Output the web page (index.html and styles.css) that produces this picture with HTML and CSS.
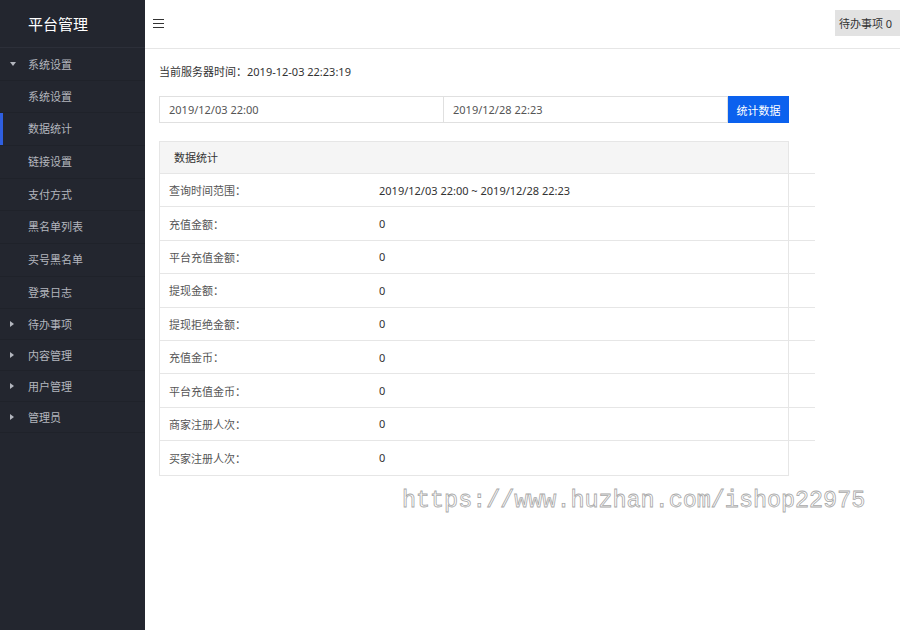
FILE: index.html
```html
<!DOCTYPE html>
<html lang="zh-CN">

<head>
  <meta charset="UTF-8">
  <meta name="viewport" content="width=device-width, initial-scale=1.0">
  <title>平台管理 - 数据统计</title>
  <link rel="stylesheet" href="styles.css">
</head>

<body>
  <aside class="sidebar">
    <div class="logo">平台管理</div>
    <ul class="menu">
      <li class="menu-group open">
        <div class="menu-title"><span class="caret"></span>系统设置</div>
        <ul class="submenu">
          <li>系统设置</li>
          <li class="active">数据统计</li>
          <li>链接设置</li>
          <li>支付方式</li>
          <li>黑名单列表</li>
          <li>买号黑名单</li>
          <li>登录日志</li>
        </ul>
      </li>
      <li class="menu-group"><div class="menu-title"><span class="caret"></span>待办事项</div></li>
      <li class="menu-group"><div class="menu-title"><span class="caret"></span>内容管理</div></li>
      <li class="menu-group"><div class="menu-title"><span class="caret"></span>用户管理</div></li>
      <li class="menu-group"><div class="menu-title"><span class="caret"></span>管理员</div></li>
    </ul>
  </aside>

  <div class="page">
    <header class="topbar">
      <span class="hamburger">
        <svg width="11" height="9" viewBox="0 0 11 9"><path d="M0 0.5h11M0 4.5h11M0 8.5h11" stroke="#333" stroke-width="1"/></svg>
      </span>
      <button class="todo-btn">待办事项 0</button>
    </header>

    <main class="content">
      <p class="server-time">当前服务器时间：2019-12-03 22:23:19</p>

      <form class="search-bar">
        <input type="text" value="2019/12/03 22:00">
        <input type="text" value="2019/12/28 22:23">
        <button type="button">统计数据</button>
      </form>

      <div class="panel">
        <div class="panel-head">数据统计</div>
        <div class="row"><span class="label">查询时间范围：</span><span>2019/12/03 22:00 ~ 2019/12/28 22:23</span></div>
        <div class="row"><span class="label">充值金额：</span><span>0</span></div>
        <div class="row"><span class="label">平台充值金额：</span><span>0</span></div>
        <div class="row"><span class="label">提现金额：</span><span>0</span></div>
        <div class="row"><span class="label">提现拒绝金额：</span><span>0</span></div>
        <div class="row"><span class="label">充值金币：</span><span>0</span></div>
        <div class="row"><span class="label">平台充值金币：</span><span>0</span></div>
        <div class="row"><span class="label">商家注册人次：</span><span>0</span></div>
        <div class="row last"><span class="label">买家注册人次：</span><span>0</span></div>
      </div>
    </main>
  </div>

  <div class="watermark">https://www.huzhan.com/ishop22975</div>
</body>

</html>
```

FILE: styles.css
```css
* {
  box-sizing: border-box;
}

body {
  margin: 0;
  display: flex;
  height: 100vh;
  font-family: "Noto Sans", "Noto Sans CJK SC", sans-serif;
  font-size: 11px;
  color: #333;
  background: #fff;
  overflow: hidden;
}

ul {
  list-style: none;
  margin: 0;
  padding: 0;
}

.sidebar {
  width: 145px;
  flex-shrink: 0;
  background-color: #23262f;
  color: #b3b6be;
}

.logo {
  height: 48px;
  line-height: 48px;
  padding-left: 28px;
  font-size: 15px;
  color: #fff;
  border-bottom: 1px solid #2c2f39;
}

.menu-title {
  display: flex;
  align-items: center;
  height: 31px;
  padding-left: 10px;
  border-bottom: 1px solid #1f222a;
}

.menu-group.open > .menu-title {
  height: 32.5px;
}

.caret {
  width: 0;
  height: 0;
  margin-right: 14px;
  border-top: 3px solid transparent;
  border-bottom: 3px solid transparent;
  border-left: 4px solid #b3b6be;
}

.menu-group.open .caret {
  border-left: 3px solid transparent;
  border-right: 3px solid transparent;
  border-top: 4px solid #b3b6be;
  border-bottom: 0;
  margin-right: 12px;
}

.submenu li {
  height: 32.7px;
  line-height: 32px;
  padding-left: 28px;
  border-bottom: 1px solid #1f222a;
}

.submenu li.active {
  box-shadow: inset 3px 0 0 #2f5fe0;
}

.page {
  flex: 1;
  display: flex;
  flex-direction: column;
}

.topbar {
  height: 49px;
  display: flex;
  align-items: flex-start;
  justify-content: space-between;
  border-bottom: 1px solid #e6e6e6;
}

.hamburger {
  display: block;
  margin: 19px 0 0 8px;
  line-height: 0;
}

.todo-btn {
  margin-top: 10px;
  height: 26px;
  width: 65px;
  border: none;
  background-color: #e2e2e2;
  color: #333;
  font-family: inherit;
  font-size: 11px;
  padding: 0 0 0 4px;
  text-align: left;
}

.content {
  padding: 0 14px;
}

.server-time {
  margin: 15px 0 0;
  line-height: 16px;
}

.search-bar {
  display: flex;
  margin-top: 16px;
  width: 630px;
}

.search-bar input {
  width: 285px;
  height: 27px;
  padding: 0 9px;
  border: 1px solid #e0e0e0;
  font-family: inherit;
  font-size: 11px;
  color: #555;
  outline: none;
}

.search-bar input + input {
  border-left: none;
  width: 284px;
}

.search-bar button {
  width: 61px;
  height: 27px;
  border: none;
  background-color: #0b61ee;
  color: #fff;
  font-family: inherit;
  font-size: 11px;
  padding: 0;
}

.panel {
  margin-top: 18px;
  width: 630px;
  border: 1px solid #e6e6e6;
}

.panel-head {
  height: 32px;
  line-height: 31px;
  padding-left: 14px;
  background-color: #f5f5f5;
  border-bottom: 1px solid #e6e6e6;
  margin-right: -27px;
  box-shadow: inset -27px 0 0 #fff;
  position: relative;
}

.panel-head::after {
  content: "";
  position: absolute;
  right: 26px;
  top: 0;
  bottom: -1px;
  border-right: 1px solid #e6e6e6;
}

.row {
  display: flex;
  align-items: center;
  height: 33.4px;
  padding-left: 9px;
  border-bottom: 1px solid #e6e6e6;
  margin-right: -27px;
}

.row.last {
  border-bottom: none;
  margin-right: 0;
}

.row .label {
  width: 210px;
  color: #555;
}

.watermark {
  position: absolute;
  left: 402px;
  top: 488px;
  font-family: "Liberation Mono", monospace;
  font-size: 23.4px;
  color: #fff;
  -webkit-text-stroke: 0.8px #a8a8a8;
}
```
